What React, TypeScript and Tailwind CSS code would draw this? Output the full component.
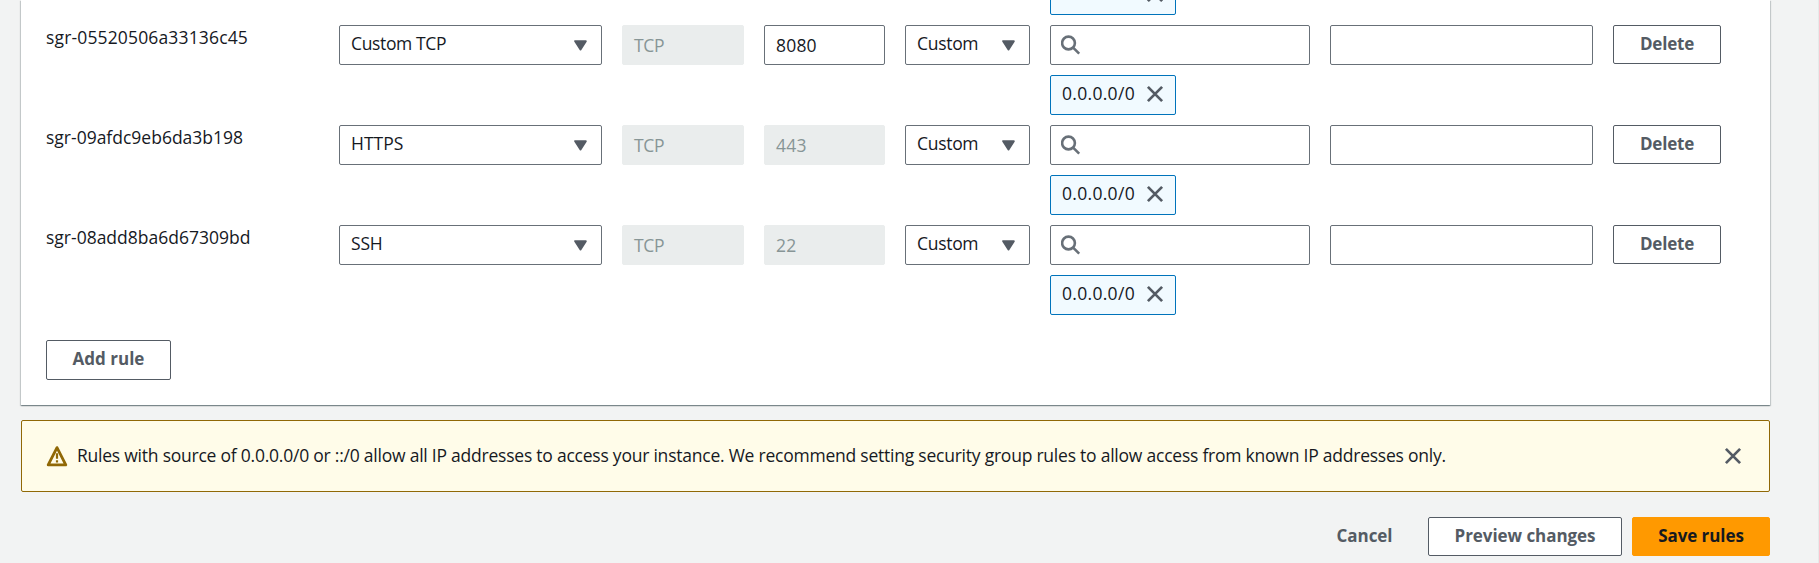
type Rule = { id: string; idClass: string; type: string; typeClass: string; port: string; editable?: boolean };

const RULES: Rule[] = [
  { id: 'sgr-05520506a33136c45', idClass: 'tracking-[0.15px]', type: 'Custom TCP', typeClass: 'tracking-[-0.36px]', port: '8080', editable: true },
  { id: 'sgr-09afdc9eb6da3b198', idClass: 'tracking-normal', type: 'HTTPS', typeClass: 'tracking-normal', port: '443' },
  { id: 'sgr-08add8ba6d67309bd', idClass: 'tracking-normal', type: 'SSH', typeClass: 'tracking-[-0.2px]', port: '22' },
];

function CloseIcon() {
  return (
    <svg width="18" height="18" viewBox="0 0 18 18" fill="none" stroke="#545b64" strokeWidth="2.7" className="shrink-0">
      <path d="M1.9 1.9 16.1 16.1M16.1 1.9 1.9 16.1" />
    </svg>
  );
}

function Caret() {
  return (
    <svg width="13" height="11" viewBox="0 0 13 11" className="shrink-0" fill="#545b64" stroke="#545b64" strokeWidth="2" strokeLinejoin="round">
      <path d="M1.2 1.2h10.6L6.5 9.4z" />
    </svg>
  );
}

function SearchIcon() {
  return (
    <svg width="20" height="20" viewBox="0 0 20 20" fill="none" stroke="#687078" strokeWidth="2.6">
      <circle cx="7.5" cy="8" r="6.4" />
      <path d="M12.1 12.6 18.2 18.6" />
    </svg>
  );
}

function Select({ value, className, textClass }: { value: string; className: string; textClass: string }) {
  return (
    <div className={`flex h-10 items-center justify-between rounded-xs border border-[#687078] bg-white pl-[11px] pr-[14px] ${className}`}>
      <span className={`pb-[4px] ${textClass}`}>{value}</span>
      <Caret />
    </div>
  );
}

function Field({ value, disabled, className }: { value: string; disabled?: boolean; className: string }) {
  return (
    <div className={`flex h-10 items-center rounded-xs border px-[11px] pb-px ${disabled ? 'border-[#eaeded] bg-[#eaeded] text-[#879596]' : 'border-[#687078] bg-white'} ${className}`}>
      {value}
    </div>
  );
}

function Chip() {
  return (
    <div className="flex h-10 w-[126px] items-center justify-between rounded-xs border border-[#0073bb] bg-[#f1faff] pb-[2px] pl-[11px] pr-[11px]">
      <span className="pb-[3px] tracking-[0.3px]">0.0.0.0/0</span>
      <CloseIcon />
    </div>
  );
}

function Button({ children, className }: { children: string; className: string }) {
  return (
    <button className={`flex items-center justify-center whitespace-nowrap rounded-xs border text-[17px] font-bold ${className}`}>
      {children}
    </button>
  );
}

function RuleRow({ rule }: { rule: Rule }) {
  return (
    <div className="flex h-[100px] items-start">
      <div className={`w-[293px] ${rule.idClass}`}>{rule.id}</div>
      <Select value={rule.type} className="mr-5 w-[263px]" textClass={rule.typeClass} />
      <Field value="TCP" disabled className="mr-5 w-[122px] tracking-[-0.3px]" />
      <Field value={rule.port} disabled={!rule.editable} className="mr-5 w-[121px] tracking-[0.2px]" />
      <Select value="Custom" className="mr-5 w-[125px]" textClass="tracking-[-0.3px]" />
      <div className="mr-5 flex w-[260px] flex-col gap-[10px]">
        <div className="flex h-10 items-center rounded-xs border border-[#687078] bg-white pl-[10px]">
          <SearchIcon />
        </div>
        <Chip />
      </div>
      <div className="mr-5 h-10 w-[263px] rounded-xs border border-[#687078] bg-white" />
      <Button className="h-[39px] w-[108px] border-[#545b64] bg-white pb-px tracking-[-0.2px] text-[#545b64]">Delete</Button>
    </div>
  );
}

export default function App() {
  return (
    <div className="h-[563px] w-full overflow-hidden border-r border-[#e6e9e9] bg-[#f2f3f3] pl-[21px] font-['Open_Sans',sans-serif] text-[17.5px] leading-6 text-[#16191f]">
      <div className="flex w-[1749px] flex-col">
        <section className="h-[405px] bg-white pl-[25px] shadow-[0_1px_1px_0_rgba(0,28,36,0.3),1px_1px_1px_0_rgba(0,28,36,0.15),-1px_1px_1px_0_rgba(0,28,36,0.15)]">
          <div className="-mt-[25px] mb-[10px] pl-[1004px]">
            <Chip />
          </div>
          {RULES.map((rule) => (
            <RuleRow key={rule.id} rule={rule} />
          ))}
          <Button className="mt-[15px] h-10 w-[125px] border-[#545b64] bg-white pb-[2px] text-[#545b64]">Add rule</Button>
        </section>

        <section className="mt-[15px] flex h-[72px] items-center rounded-xs border border-[#906806] bg-[#fffce9] pl-[24px] pr-[27px]">
          <svg width="22" height="22" viewBox="0 0 22 22" fill="none" stroke="#906806" strokeWidth="2.8" strokeLinejoin="round">
            <path d="M11 2.6 19.8 19.9H2.2z" />
            <path d="M11 8.2v5.6M11 15.2v2.4" strokeWidth="2.2" />
          </svg>
          <p className="ml-[9px] flex-1 whitespace-nowrap pb-[3px] tracking-[-0.23px]">
            Rules with source of 0.0.0.0/0 or ::/0 allow all IP addresses to access your instance. We recommend setting security group rules to allow access from known IP addresses only.
          </p>
          <CloseIcon />
        </section>

        <footer className="mt-[25px] flex justify-end">
          <Button className="mr-[12px] h-[39px] w-[103px] border-transparent pb-px tracking-[-0.06px] text-[#545b64]">Cancel</Button>
          <Button className="mr-[10px] h-[39px] w-[194px] border-[#545b64] bg-white pb-px tracking-[-0.06px] text-[#545b64]">Preview changes</Button>
          <Button className="h-[39px] w-[138px] border-[#ff9900] bg-[#ff9900] pb-px tracking-[-0.06px] text-[#16191f]">Save rules</Button>
        </footer>
      </div>
    </div>
  );
}
